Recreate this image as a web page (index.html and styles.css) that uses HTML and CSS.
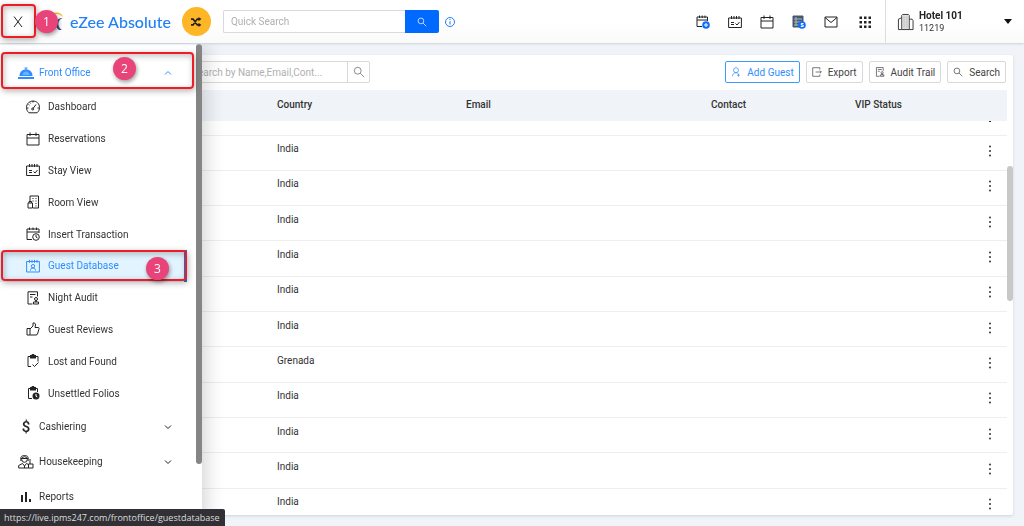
FILE: index.html
```html
<!DOCTYPE html>
<html lang="en">
<head>
    <meta charset="UTF-8">
    <meta name="viewport" content="width=device-width, initial-scale=1.0">
    <title>eZee Absolute - Guest Database</title>
    <link rel="stylesheet" href="styles.css">
</head>
<body>

    <!-- Shared icons -->
    <svg class="sprite" aria-hidden="true">
        <symbol id="calendar" viewBox="0 0 14 14">
            <path d="M1 2.500h12v10.500H1zM1 6h12M4 .5v3.500M10 .5v3.500"/>
        </symbol>
        <symbol id="stay" viewBox="0 0 14 14">
            <path d="M.6 3h12.800v9.500H.6zM3.500 1v3M6 1v3M8.500 1v3M11 1v3M3 7.500h3M3 9.500h3M7.500 8.500l1.500 1.500 2.500-3"/>
        </symbol>
        <symbol id="audit" viewBox="0 0 14 14">
            <path d="M6.500 13H2V.8h9.500v4.700M4 3.500h5.500M4 6h2.500"/>
            <circle cx="10" cy="8" r="1.500"/>
            <path d="M9.500 9.500v1h1v-1M7.500 13v-2h5v2z"/>
        </symbol>
        <symbol id="magnifier" viewBox="0 0 14 14">
            <circle cx="5.500" cy="5.500" r="4"/>
            <path d="M8.500 8.500l4.500 4.500"/>
        </symbol>
        <symbol id="dots" viewBox="0 0 4 14">
            <circle class="solid" cx="2" cy="2.500" r="1"/>
            <circle class="solid" cx="2" cy="7" r="1"/>
            <circle class="solid" cx="2" cy="11.500" r="1"/>
        </symbol>
        <symbol id="chevron" viewBox="0 0 8 8">
            <path d="M1 2.500l3 3 3-3"/>
        </symbol>
    </svg>

    <header class="header">
        <button class="closeButton" aria-label="Close menu">
            <svg class="icon" viewBox="0 0 14 14"><path d="M3 1.500l8 10.500M11 1.500L3 12"/></svg>
        </button>
        <a href="#" class="brand">
            <svg class="brandMark" viewBox="0 0 20 22" aria-hidden="true">
                <path fill="#fbb829" d="M6 3C11 0 16 2 17 6 14 3 10 2 6 3z"/>
                <path fill="#3b4a8c" d="M17 7c-5 1-7 8-1 12h-3C7 15 9 7 17 7z"/>
                <path fill="#8aa4d8" d="M11 5C6 8 6 15 11 19 3 16 3 7 11 5z"/>
            </svg>
            <span>eZee Absolute</span>
        </a>
        <button class="shuffle" aria-label="Switch">
            <svg viewBox="0 0 14 12"><path d="M1 2.500h2.500l5 7H11M1 9.500h2.500l5-7H11"/><path class="solid" d="M10 0l3.500 2.500L10 5zM10 7l3.500 2.500L10 12z"/></svg>
        </button>
        <form class="quickSearch">
            <input type="text" placeholder="Quick Search" aria-label="Quick Search">
            <button type="button" aria-label="Search"><svg class="icon small"><use href="#magnifier"/></svg></button>
        </form>
        <a href="#" class="info" aria-label="Information">
            <svg viewBox="0 0 12 12"><circle cx="6" cy="6" r="4.500"/><path d="M6 5.200v3.300M6 3v1.200"/></svg>
        </a>

        <nav class="tools">
            <a href="#" aria-label="New reservation">
                <svg class="icon" viewBox="0 0 14 14"><path d="M6 11.500H1V2h10.500v4M1 5h10.500M3.500.5V3M6.200.5V3M9 .5V3"/><circle class="blue" cx="10" cy="10" r="3.800"/><path class="whiteLine" d="M8 10h4M10 8v4"/></svg>
            </a>
            <a href="#" aria-label="Stay view"><svg class="icon"><use href="#stay"/></svg></a>
            <a href="#" aria-label="Reservations"><svg class="icon"><use href="#calendar"/></svg></a>
            <a href="#" aria-label="Folios">
                <svg class="icon" viewBox="0 0 14 14"><path class="sheet" d="M1 1h10v11H1z"/><path class="sheetLine" d="M2 4h8M2 7h8M2 10h5M4 2v9"/><circle class="blue" cx="10" cy="10" r="3.800"/><path class="whiteLine" d="M11.500 8.500H9.300v1.500h1.900v1.500H8.800"/></svg>
            </a>
            <a href="#" aria-label="Messages">
                <svg class="icon" viewBox="0 0 14 14"><path d="M1 2h12v10H1zM1 2.500l6 5 6-5"/></svg>
            </a>
            <a href="#" class="apps" aria-label="Apps">
                <svg class="icon" viewBox="0 0 14 14"><path class="solid" d="M1.500 1.500h2.500v2.500H1.500zM6 1.500h2.500v2.500H6zM10.500 1.500H13v2.500h-2.500zM1.500 6h2.500v2.500H1.500zM6 6h2.500v2.500H6zM10.500 6H13v2.500h-2.500zM1.500 10.500h2.500V13H1.500zM6 10.500h2.500V13H6zM10.500 10.500H13V13h-2.500z"/></svg>
            </a>
        </nav>

        <button class="hotel">
            <svg class="building" viewBox="0 0 18 18"><path class="shade" d="M6 1h6v16H6z"/><path d="M5 17V2l1-1h6l1 1v15zM5 4.500L1.500 6v11H5M13 6h3l1 1.500V17h-4"/><path class="windows" d="M7.500 3.500v11M10.500 3.500v11"/></svg>
            <span class="hotelText"><strong>Hotel 101</strong><span>11219</span></span>
            <svg class="caret" viewBox="0 0 8 6"><path class="solid" d="M0 0h8L4 5z"/></svg>
        </button>
    </header>

    <main class="page">
        <section class="card">
            <div class="toolbar">
                <form class="tableSearch">
                    <input type="text" placeholder="Search by Name,Email,Cont..." aria-label="Search guests">
                    <button type="button" aria-label="Search guests"><svg class="icon medium"><use href="#magnifier"/></svg></button>
                </form>
                <div class="actions">
                    <button class="primary">
                        <svg class="icon small" viewBox="0 0 14 14"><circle cx="7" cy="4.500" r="3.500"/><path d="M2 13c0-3 2-5 5-5 1.500 0 2.500.5 3 1.500M10.500 9.500v4M8.500 11.500h4"/></svg>
                        Add Guest
                    </button>
                    <button>
                        <svg class="icon small" viewBox="0 0 14 14"><path d="M11 3.500V1H1v12h10v-2.500M5 7h8M11 5l2 2-2 2"/></svg>
                        Export
                    </button>
                    <button><svg class="icon small"><use href="#audit"/></svg>Audit Trail</button>
                    <button><svg class="icon small"><use href="#magnifier"/></svg>Search</button>
                </div>
            </div>

            <div class="tableArea">
                <div class="tableWrap">
                    <table>
                        <colgroup>
                            <col>
                            <col class="colCountry">
                            <col class="colEmail">
                            <col class="colContact">
                            <col class="colVip">
                            <col class="colMenu">
                        </colgroup>
                        <thead>
                            <tr><th></th><th>Country</th><th>Email</th><th>Contact</th><th>VIP Status</th><th></th></tr>
                        </thead>
                        <tbody>
                            <tr class="cut"><td></td><td></td><td></td><td></td><td></td><td><svg viewBox="0 0 4 4"><path class="solid" d="M1 0h2v1H1z"/></svg></td></tr>
                            <tr><td></td><td>India</td><td></td><td></td><td></td><td><button class="rowMenu" aria-label="More"><svg><use href="#dots"/></svg></button></td></tr>
                            <tr><td></td><td>India</td><td></td><td></td><td></td><td><button class="rowMenu" aria-label="More"><svg><use href="#dots"/></svg></button></td></tr>
                            <tr><td></td><td>India</td><td></td><td></td><td></td><td><button class="rowMenu" aria-label="More"><svg><use href="#dots"/></svg></button></td></tr>
                            <tr><td></td><td>India</td><td></td><td></td><td></td><td><button class="rowMenu" aria-label="More"><svg><use href="#dots"/></svg></button></td></tr>
                            <tr><td></td><td>India</td><td></td><td></td><td></td><td><button class="rowMenu" aria-label="More"><svg><use href="#dots"/></svg></button></td></tr>
                            <tr><td></td><td>India</td><td></td><td></td><td></td><td><button class="rowMenu" aria-label="More"><svg><use href="#dots"/></svg></button></td></tr>
                            <tr><td></td><td>Grenada</td><td></td><td></td><td></td><td><button class="rowMenu" aria-label="More"><svg><use href="#dots"/></svg></button></td></tr>
                            <tr><td></td><td>India</td><td></td><td></td><td></td><td><button class="rowMenu" aria-label="More"><svg><use href="#dots"/></svg></button></td></tr>
                            <tr><td></td><td>India</td><td></td><td></td><td></td><td><button class="rowMenu" aria-label="More"><svg><use href="#dots"/></svg></button></td></tr>
                            <tr><td></td><td>India</td><td></td><td></td><td></td><td><button class="rowMenu" aria-label="More"><svg><use href="#dots"/></svg></button></td></tr>
                            <tr><td></td><td>India</td><td></td><td></td><td></td><td><button class="rowMenu" aria-label="More"><svg><use href="#dots"/></svg></button></td></tr>
                        </tbody>
                    </table>
                </div>
                <div class="tableScroll"><div class="thumb"></div></div>
            </div>
        </section>
    </main>

    <!-- Slide-out menu -->
    <aside class="sidebar">
        <nav class="menu">
            <a href="#" class="group open">
                <svg class="icon large" viewBox="0 0 16 14"><path class="solid" d="M0 11h16v2H0z"/><path class="solid" d="M1.500 10c0-4 2.500-6.500 6.500-6.500s6.500 2.500 6.500 6.500z"/><path class="tint" d="M4.500 9c0-2 1.500-3.500 3.500-3.500S11.500 7 11.500 9z"/><path d="M6.500 2h3M8 2v2"/></svg>
                <span>Front Office</span>
                <svg class="arrow up"><use href="#chevron"/></svg>
            </a>
            <div class="submenu">
                <a href="#">
                    <svg class="icon" viewBox="0 0 14 14"><path d="M3 12.800C-.5 10 0 5 2.500 2.700 5 .5 9 .5 11.500 2.700 14 5 14.500 10 11 12.800zM7 8.500l3-4M7 1v1.500M2.500 4.500l1 .7M1 8h1.500M11.500 8H13M4 2.500l.7 1"/><circle cx="6.700" cy="9" r="1"/></svg>
                    Dashboard
                </a>
                <a href="#"><svg class="icon"><use href="#calendar"/></svg>Reservations</a>
                <a href="#"><svg class="icon"><use href="#stay"/></svg>Stay View</a>
                <a href="#">
                    <svg class="icon" viewBox="0 0 14 14"><path d="M4 6V1h8.500v12H7M2 8h4.500v5H2zM3 8V6.500h2.500V8M6.500 3.500h1M9.500 3.500h1M6.500 6h1M9.500 6h1M9.500 8.500h1M9.500 11h1"/></svg>
                    Room View
                </a>
                <a href="#">
                    <svg class="icon" viewBox="0 0 14 14"><path d="M6 12.500H1V2h12v4M1 5h12M3.500.5V3M7 .5V3M10.500.5V3"/><circle cx="10" cy="10" r="3.300"/><path d="M10 8v2l1.500 1"/></svg>
                    Insert Transaction
                </a>
                <a href="#" class="active">
                    <svg class="icon" viewBox="0 0 14 14"><path d="M.6 2.500h12.800V13H.6zM3.500.8v3M6 .8v3M8.500.8v3M11 .8v3M4.500 11.500c0-2 1-2.500 2.500-2.500s2.500.5 2.500 2.500"/><circle cx="7" cy="7.200" r="1.700"/></svg>
                    Guest Database
                </a>
                <a href="#"><svg class="icon"><use href="#audit"/></svg>Night Audit</a>
                <a href="#">
                    <svg class="icon" viewBox="0 0 14 14"><path d="M1 6.500h3V13H1zM4 7l3-3V1c1.500-.5 2.500.5 2.500 2L9 5.500h3c1 0 1.300.5 1 1.500l-1.500 5c-.2.700-.7 1-1.500 1H4"/></svg>
                    Guest Reviews
                </a>
                <a href="#">
                    <svg class="icon" viewBox="0 0 14 14"><path d="M5 12.500H2v-10h10v5M6.500 10.500l2 2 4-4"/><path class="solid" d="M4 1h1.500c0-1.300 3-1.300 3 0H10v3.500H4z"/></svg>
                    Lost and Found
                </a>
                <a href="#">
                    <svg class="icon" viewBox="0 0 14 14"><path d="M6 12.500H2.500v-10h9V6"/><path class="solid" d="M4 1h1.500c0-1.300 3-1.300 3 0H10v3.500H4z"/><circle class="solid" cx="10" cy="10" r="3.500"/><path class="whiteLine" d="M10 8v2.200l1.300.8"/></svg>
                    Unsettled Folios
                </a>
            </div>
            <a href="#" class="group">
                <span class="dollar">$</span>
                <span>Cashiering</span>
                <svg class="arrow"><use href="#chevron"/></svg>
            </a>
            <a href="#" class="group">
                <svg class="icon large" viewBox="0 0 16 14"><circle cx="6.500" cy="4.500" r="2.800"/><path d="M3 6C2 2 3.500.5 6.500.5S11 2 10 6M3 3.500h7M.7 13V10.500l3.800-2 2 2.500 2-2.500 2 1V13zM6.500 11v2M12 4v5M10.500 13V9h4.500v4z"/></svg>
                <span>Housekeeping</span>
                <svg class="arrow"><use href="#chevron"/></svg>
            </a>
            <a href="#" class="group">
                <svg class="icon large" viewBox="0 0 16 14"><path class="solid" d="M3 5h2v7H3zM7 2h2v10H7zM11 9h2v3h-2z"/></svg>
                <span>Reports</span>
            </a>
        </nav>
        <div class="menuScroll"></div>
    </aside>

    <!-- Step markers drawn over the interface -->
    <div class="mark markClose"></div>
    <div class="mark markOffice"></div>
    <div class="mark markGuest"></div>
    <span class="step stepClose">1</span>
    <span class="step stepOffice">2</span>
    <span class="step stepGuest">3</span>

    <div class="statusBar">https://live.ipms247.com/frontoffice/guestdatabase</div>

</body>
</html>
```
FILE: styles.css
```css
* {
    box-sizing: border-box;
}

body {
    margin: 0;
    height: 100vh;
    overflow: hidden;
    display: flex;
    flex-direction: column;
    font-family: Roboto, "Liberation Sans", sans-serif;
    font-size: 10px;
    color: #333333;
    background-color: #f0f4f8;
}

a {
    color: inherit;
    text-decoration: none;
}

button, input {
    font: inherit;
    color: inherit;
    margin: 0;
    padding: 0;
    border: none;
    background: none;
}

button {
    cursor: pointer;
}

input::placeholder {
    color: #b0b0b0;
    opacity: 1;
}

/* Icons */
svg {
    display: block;
    flex-shrink: 0;
    fill: none;
    stroke: currentColor;
}

.sprite {
    position: absolute;
    width: 0;
    height: 0;
}

.icon {
    width: 14px;
    height: 14px;
}

.icon.small {
    width: 10px;
    height: 10px;
}

.icon.medium {
    width: 12px;
    height: 12px;
}

.icon.large {
    width: 16px;
    height: 14px;
}

.solid {
    fill: currentColor;
    stroke: none;
}

.tint {
    fill: #69b4ff;
    stroke: none;
}

.blue {
    fill: #0d6efd;
    stroke: none;
}

.sheet {
    fill: #46586e;
    stroke: #46586e;
}

.sheetLine {
    stroke: #aab6c4;
}

.shade {
    fill: #dddddd;
    stroke: none;
}

.windows {
    stroke: #aaaaaa;
    stroke-dasharray: 1 1;
}

.whiteLine {
    stroke: #ffffff;
}

/* Top bar */
.header {
    position: relative;
    z-index: 3;
    height: 43px;
    flex-shrink: 0;
    display: flex;
    align-items: center;
    background: linear-gradient(#ffffff 50%, #fafafa);
    box-shadow: 0 1px 2px #c9d2d8;
}

.closeButton {
    width: 36px;
    height: 36px;
    display: flex;
    align-items: center;
    justify-content: center;
    color: #222222;
}

.brand {
    display: flex;
    align-items: center;
    gap: 4px;
    margin-left: 10px;
    font-family: Lato, sans-serif;
    font-size: 16px;
    font-weight: 500;
    color: #2080f5;
}

.brandMark {
    width: 20px;
    height: 22px;
    stroke: none;
}

.shuffle {
    width: 29px;
    height: 29px;
    margin-left: 11px;
    display: flex;
    align-items: center;
    justify-content: center;
    border-radius: 50%;
    color: #222222;
    background-color: #ffb626;
}

.shuffle svg {
    width: 12px;
    height: 10px;
    stroke-width: 2;
}

.quickSearch {
    display: flex;
    width: 216px;
    height: 23px;
    margin-left: 12px;
}

.quickSearch input {
    flex: 1;
    min-width: 0;
    padding: 0 7px;
    border: 1px solid #d9d9d9;
    border-right: none;
    border-radius: 2px 0 0 2px;
    background-color: #ffffff;
}

.quickSearch button {
    width: 34px;
    display: flex;
    align-items: center;
    justify-content: center;
    color: #ffffff;
    background-color: #0069ff;
    border-radius: 0 2px 2px 0;
}

.info {
    margin-left: 5px;
    color: #2080f5;
}

.info svg {
    width: 12px;
    height: 12px;
}

.tools {
    display: flex;
    gap: 18px;
    margin-left: auto;
    margin-right: 13px;
    color: #222222;
}

.tools .apps {
    margin-left: 2px;
}

.hotel {
    width: 139px;
    height: 100%;
    display: flex;
    align-items: center;
    padding: 0 12px 0 11px;
    gap: 5px;
    border-left: 1px solid #dddddd;
    text-align: left;
}

.hotelText {
    display: flex;
    flex-direction: column;
    font-size: 9px;
    line-height: 12px;
}

.hotelText strong {
    font-size: 10px;
    font-weight: 700;
    color: #222222;
}

.building {
    width: 17px;
    height: 18px;
}

.caret {
    width: 8px;
    height: 6px;
    margin-left: auto;
    color: #111111;
}

/* Guest list */
.page {
    flex: 1;
    min-height: 0;
    display: flex;
    padding: 12px 11px 11px;
}

.card {
    flex: 1;
    min-width: 0;
    display: flex;
    flex-direction: column;
    background-color: #ffffff;
    border-radius: 2px;
    box-shadow: 0 1px 3px #ccd3da;
    overflow: hidden;
}

.toolbar {
    display: flex;
    justify-content: space-between;
    padding: 6px 7px 7px;
}

.tableSearch {
    display: flex;
    width: 186px;
    height: 22px;
    margin-left: 166px;
    border: 1px solid #d9d9d9;
    border-radius: 2px;
}

.tableSearch input {
    flex: 1;
    min-width: 0;
    padding: 0 7px;
}

.tableSearch button {
    width: 22px;
    display: flex;
    align-items: center;
    justify-content: center;
    border-left: 1px solid #d9d9d9;
    color: #777777;
}

.actions {
    display: flex;
    gap: 6px;
}

.actions button {
    height: 22px;
    display: flex;
    align-items: center;
    gap: 6px;
    padding: 0 5px;
    border: 1px solid #d9d9d9;
    border-radius: 2px;
    color: #444444;
}

.actions .primary {
    border-color: #3d9bff;
    color: #2f8dff;
}

.tableArea {
    flex: 1;
    min-height: 0;
    display: flex;
}

.tableWrap {
    flex: 1;
    min-width: 0;
    overflow: hidden;
}

/* The last row runs under the bottom edge of the card */
table {
    width: 100%;
    height: calc(100% + 9px);
    table-layout: fixed;
    border-collapse: collapse;
}

.colCountry {
    width: 189px;
}

.colEmail {
    width: 245px;
}

.colContact {
    width: 144px;
}

.colVip {
    width: 125px;
}

.colMenu {
    width: 35px;
}

th {
    height: 31px;
    padding: 0 8px 2px;
    text-align: left;
    font-weight: 500;
    background-color: #f0f4f8;
}

td {
    padding: 0 8px 8px;
    border-bottom: 1px solid #eeeeee;
}

td:last-child {
    padding: 0 8px 3px;
}

.cut td {
    height: 14px;
    padding: 0 8px;
    vertical-align: top;
}

.cut svg {
    width: 4px;
    height: 4px;
    margin: 0 auto;
}

.rowMenu {
    display: block;
    margin: 0 auto;
}

.rowMenu svg {
    width: 4px;
    height: 14px;
}

.tableScroll {
    width: 6px;
    padding-top: 76px;
}

.thumb {
    height: 135px;
    border-radius: 3px;
    background-color: #c8c8c8;
}

/* Slide-out menu */
.sidebar {
    position: fixed;
    top: 44px;
    bottom: 0;
    left: 0;
    z-index: 2;
    width: 202px;
    display: flex;
    background-color: #ffffff;
    box-shadow: 2px 0 20px rgba(0, 0, 0, 0.2);
    overflow: hidden auto;
    scrollbar-width: none;
}

.menu {
    flex: 1;
    padding-top: 11px;
}

.group {
    height: 35px;
    display: flex;
    align-items: center;
    gap: 5px;
    padding: 0 24px 0 18px;
}

.open {
    color: #2f8dff;
}

.dollar {
    width: 16px;
    text-align: center;
    font-size: 15px;
    font-weight: 500;
    color: #222222;
}

.arrow {
    width: 8px;
    height: 8px;
    margin-left: auto;
}

.up {
    transform: rotate(180deg);
}

.submenu {
    display: grid;
    grid-auto-rows: 1fr;
    height: 318px;
    margin-top: 1px;
    margin-right: 9px;
}

.submenu a {
    display: flex;
    align-items: center;
    gap: 8px;
    padding-left: 26px;
}

.menu svg {
    color: #222222;
}

.submenu .active {
    color: #2f8dff;
    background-color: #e2f4ff;
    border-right: 3px solid #1677e8;
}

.menu .open svg, .menu .active svg {
    color: #2f8dff;
}

.menuScroll {
    width: 6px;
    height: 420px;
    border-radius: 3px;
    background-color: #858585;
}

/* Step markers */
.mark {
    position: absolute;
    z-index: 4;
    border: 2px solid #ee1c25;
    border-radius: 4px;
    box-shadow: 1px 2px 6px rgba(0, 0, 0, 0.3), inset 1px 2px 6px rgba(0, 0, 0, 0.25);
    pointer-events: none;
}

.markClose {
    top: 4px;
    left: 1px;
    width: 35px;
    height: 34px;
}

.markOffice {
    top: 52px;
    left: 1px;
    width: 193px;
    height: 37px;
}

.markGuest {
    top: 250px;
    left: 1px;
    width: 186px;
    height: 31px;
}

.step {
    position: absolute;
    z-index: 5;
    width: 23px;
    height: 23px;
    border-radius: 50%;
    font-family: "Open Sans", sans-serif;
    font-size: 12px;
    line-height: 23px;
    text-align: center;
    color: #ffffff;
    background-color: #e8447a;
    box-shadow: 1px 2px 4px rgba(0, 0, 0, 0.4);
}

.stepClose {
    top: 10px;
    left: 35px;
}

.stepOffice {
    top: 57px;
    left: 113px;
}

.stepGuest {
    top: 257px;
    left: 146px;
}

.statusBar {
    position: fixed;
    bottom: 0;
    left: 0;
    z-index: 6;
    height: 17px;
    padding: 0 5px 0 4px;
    border-radius: 0 2px 0 0;
    font-family: "Open Sans", sans-serif;
    font-size: 9px;
    line-height: 17px;
    color: #dddddd;
    background-color: #303035;
}
```
